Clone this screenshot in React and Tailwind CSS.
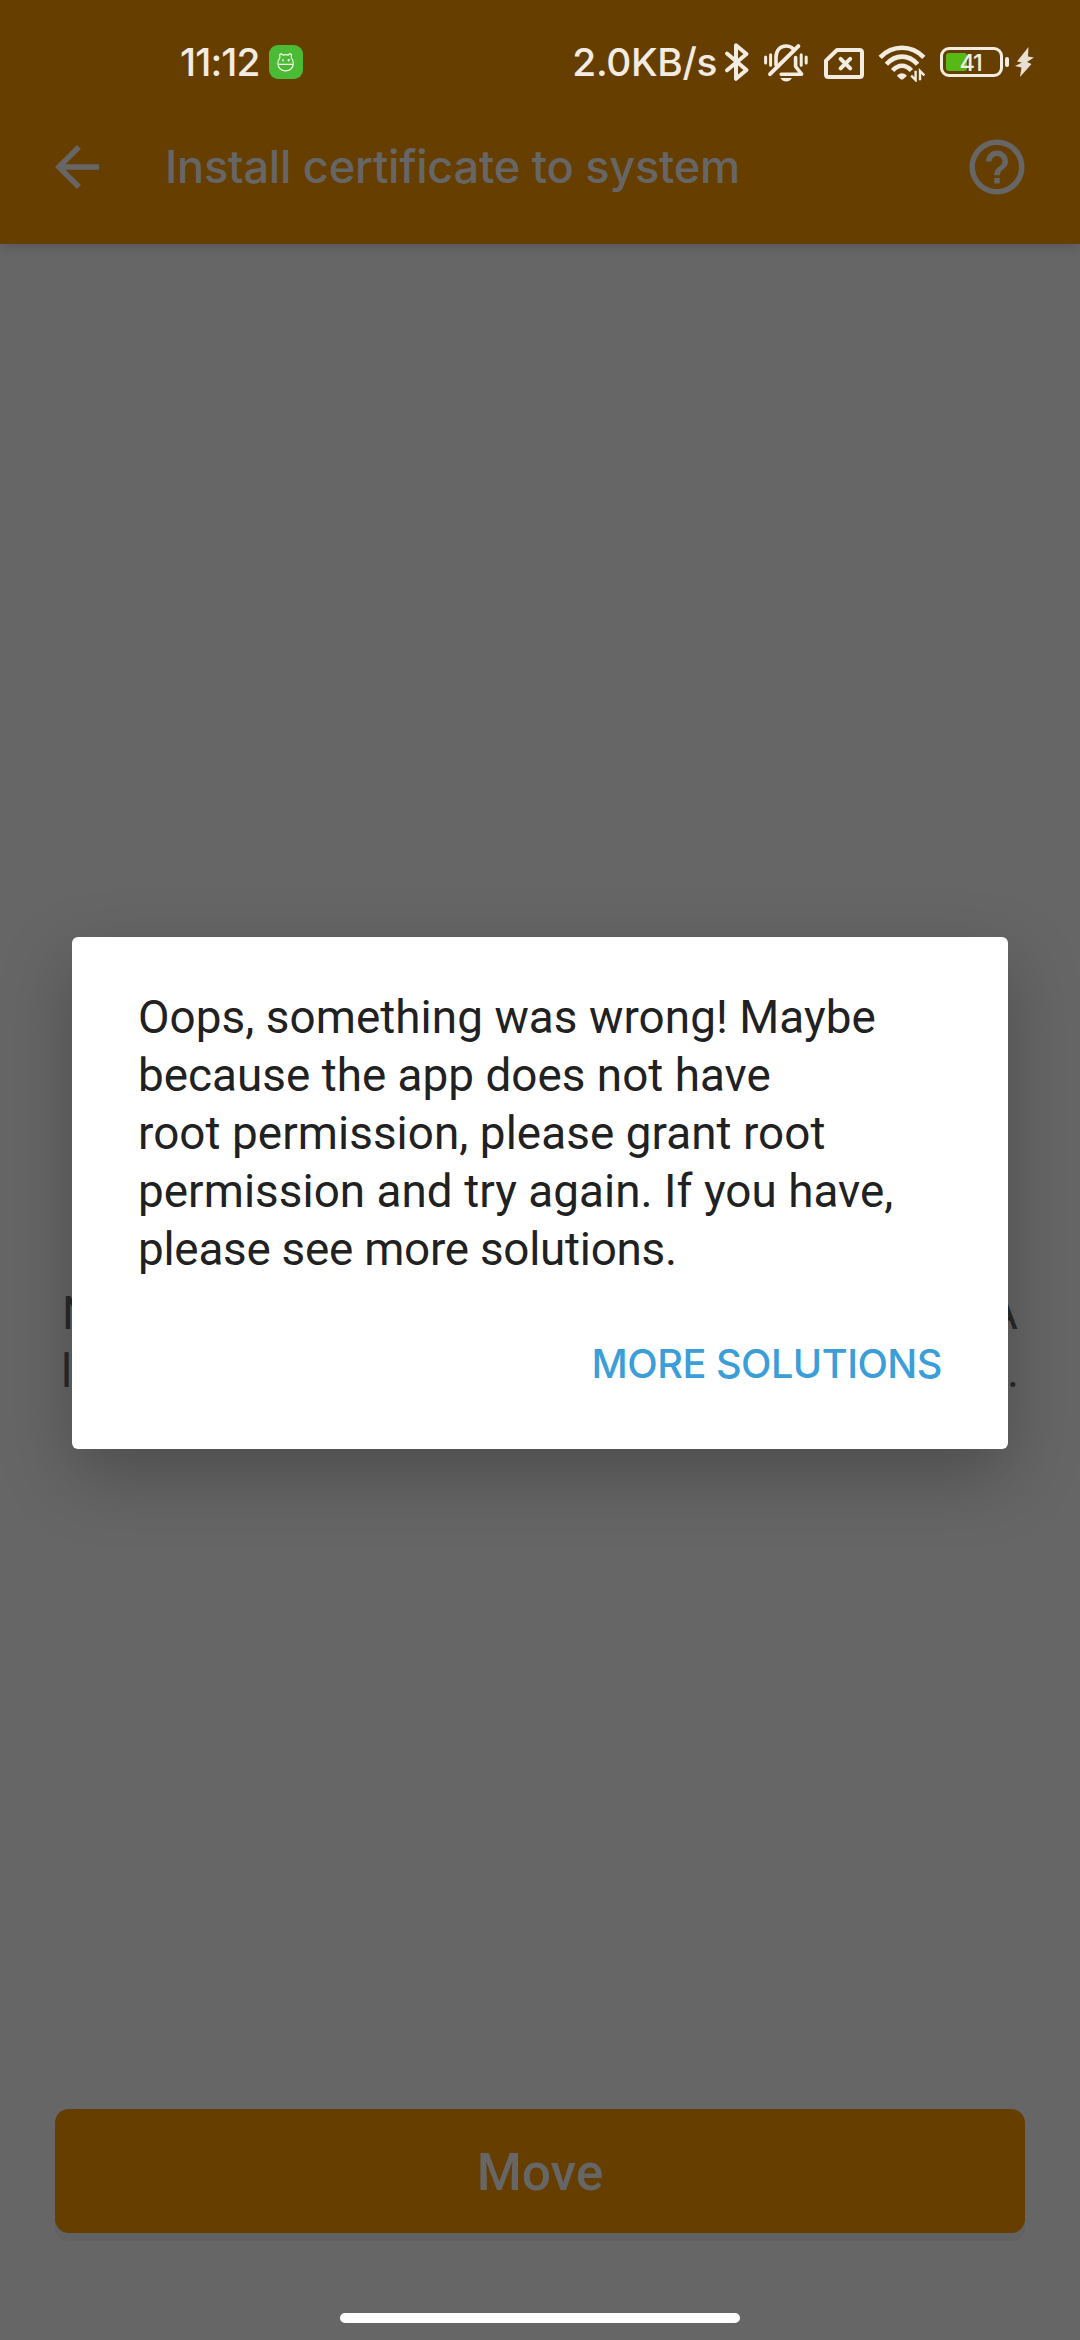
const MESSAGE = [
  { text: 'Oops, something was wrong! Maybe', style: 'tracking-[0.07px]' },
  { text: 'because the app does not have', style: 'tracking-[0.03px]' },
  { text: 'root permission, please grant root', style: 'tracking-[0.07px]' },
  { text: 'permission and try again. If you have,', style: 'tracking-[0.05px]' },
  { text: 'please see more solutions.', style: 'tracking-[-0.25px]' },
];

function AppBadge() {
  return (
    <svg className="ml-[9px] h-[34px] w-[34px] rounded-[9px] bg-[#4bbb35]" viewBox="0 0 34 34" fill="none" stroke="#f3fbe9" strokeWidth="1.2">
      <path d="M10.8 13.2V9.4l1.6-.7 1.6 1.4q2.6-.8 5.2 0l1.6-1.4 1.6.7v3.8q1.9 2.2 1.9 5c0 4.6-3.2 7.6-7.7 7.6s-7.7-3-7.7-7.6q0-2.8 1.9-5z" />
      <path d="M9.4 19.4h14.6M14 14v2.4M19.6 14v2.4M18.5 15.2h2.4" />
    </svg>
  );
}

function BluetoothIcon() {
  return (
    <svg className="h-10 w-[26px]" viewBox="0 0 26 40" fill="none" stroke="#f3ece2" strokeWidth="4" strokeLinecap="round" strokeLinejoin="round">
      <path d="M3 11.5 22.5 28 12 36.8V3.3L22.5 12 3 28.2" />
    </svg>
  );
}

function MutedBellIcon() {
  return (
    <svg className="ml-[14px] h-10 w-[44px]" viewBox="0 0 44 40" fill="none" stroke="#f3ece2" strokeLinecap="round" strokeLinejoin="round">
      <path d="M1.6 15v6M6.6 12.8v10.5M37.2 12.8v10.5M42.2 15v6" strokeWidth="3" />
      <path d="M12 23V15.5C12 8.5 16 4 22 4q4.6 0 7.4 3M31.6 15.6V24.5l6 7.7H17.2" strokeWidth="3.6" />
      <path d="M6 32.2 34.4 4.2" strokeWidth="4" />
      <path d="M16.4 36h11.6q-2.3 3.6-5.8 3.6T16.4 36z" fill="#f3ece2" stroke="none" />
    </svg>
  );
}

function NoSimIcon() {
  return (
    <svg className="ml-4 h-10 w-10" viewBox="0 0 40 40" fill="none" stroke="#f3ece2" strokeLinecap="round" strokeLinejoin="round">
      <path d="M13 8h22.5q2.5 0 2.5 2.5v22q0 2.5-2.5 2.5h-31Q2 35 2 32.5V18.6z" strokeWidth="4" />
      <path d="M16.6 16.8l9.6 9.6M26.2 16.8l-9.6 9.6" strokeWidth="4" />
    </svg>
  );
}

function WifiIcon() {
  return (
    <svg className="ml-[14px] h-10 w-[48px]" viewBox="0 0 48 40" fill="none" stroke="#f3ece2" strokeWidth="4.6">
      <path d="M2.2 15.300Q11.500 5.800 24 5.800T45.800 15.300" />
      <path d="M8.400 22.200Q15.400 14.600 24 14.600T39.600 22.200" />
      <path d="M14.600 28.500Q19 23.700 24 23.700T33.400 28.500" />
      <path d="M19.400 33Q23.900 29.400 28.400 33q.4.800-.2 1.500L25.400 37q-1.500 1.200-3 0l-2.800-2.500q-.6-.700-.2-1.500z" fill="#f3ece2" stroke="none" />
      <path d="M37.600 28.800v9.200l-4.400-4.400M42 38.200v-9.200l4.400 4.400" strokeWidth="2.400" />
    </svg>
  );
}

function Battery() {
  return (
    <div className="ml-[14px] flex items-center">
      <div className="flex h-[30px] w-[63px] rounded-[9px] border-[3px] border-[#f3ece2] p-[3px]">
        <div className="relative h-[18px] w-[51px]">
          <div className="h-full w-[21px] rounded-[3px] bg-[#58b916]" />
          <span className="absolute inset-0 pr-0.5 text-center text-[23.500px] leading-[19px] font-medium tracking-[-1.200px]">41</span>
        </div>
      </div>
      <div className="ml-[2px] h-[10px] w-1 rounded-[2px] bg-[#f3ece2]" />
      <svg className="ml-[6px] h-[30px] w-[19px]" viewBox="0 0 19 30" fill="#e9e0d3">
        <path d="M13.500 0 2 14.500l5 1L0 19l6.500 1.500L5 30 16.500 17l-4.500-2L19 10.500l-6-1z" />
      </svg>
    </div>
  );
}

function StatusBar() {
  return (
    <div className="flex h-[90px] items-center justify-between pt-[34px] pr-[46px] pl-[180px] text-[38.800px] leading-[56px] font-medium text-[#f3ece2] font-['Inter',sans-serif]">
      <div className="flex items-center">
        <span className="tracking-[-0.870px]">11:12</span>
        <AppBadge />
      </div>
      <div className="flex items-center">
        <span className="mr-[7px] tracking-[-0.340px]">2.0KB/s</span>
        <BluetoothIcon />
        <MutedBellIcon />
        <NoSimIcon />
        <WifiIcon />
        <Battery />
      </div>
    </div>
  );
}

function AppBar() {
  return (
    <div className="flex h-[154px] items-center pr-[50px] pl-[44px] text-[#666666]">
      <svg className="h-[66px] w-[66px]" viewBox="0 0 24 24" fill="currentColor">
        <path d="M20 11H7.830l5.590-5.590L12 4l-8 8 8 8 1.410-1.410L7.830 13H20v-2z" />
      </svg>
      <h1 className="ml-[55px] flex-1 text-[45.200px] leading-[58px] font-medium tracking-[-0.260px] font-['Inter',sans-serif]">Install certificate to system</h1>
      <svg className="h-[66px] w-[66px]" viewBox="0 0 24 24" fill="currentColor">
        <path d="M11 18h2v-2h-2v2zm1-16C6.480 2 2 6.480 2 12s4.480 10 10 10 10-4.480 10-10S17.520 2 12 2zm0 18c-4.410 0-8-3.590-8-8s3.590-8 8-8 8 3.590 8 8-3.590 8-8 8zm0-14c-2.210 0-4 1.790-4 4h2c0-1.100.900-2 2-2s2 .900 2 2c0 2-3 1.750-3 5h2c0-2.250 3-2.500 3-5 0-2.210-1.790-4-4-4z" />
      </svg>
    </div>
  );
}

function Dialog() {
  return (
    <div role="dialog" className="absolute top-[937px] left-[72px] h-[512px] w-[936px] rounded-[6px] bg-white px-[66px] pt-[52px] shadow-[0_26px_70px_rgba(0,0,0,0.25)]">
      <div className="text-[45.800px] leading-[58px] text-[#212121]">
        {MESSAGE.map((line) => (
          <p key={line.text} className={'whitespace-nowrap ' + line.style}>{line.text}</p>
        ))}
      </div>
      <div className="mt-[65px] flex justify-end">
        <button className="text-[39.700px] leading-[40px] font-medium tracking-[-0.510px] text-[#3b9ed8] font-['Inter',sans-serif]">MORE SOLUTIONS</button>
      </div>
    </div>
  );
}

export default function App() {
  return (
    <div className="relative flex h-[2340px] w-[1080px] flex-col overflow-hidden bg-[#666666] font-['Roboto',sans-serif]">
      <header className="bg-[#663f00] shadow-[0_4px_10px_rgba(0,0,0,0.12)]">
        <StatusBar />
        <AppBar />
      </header>
      <main className="flex flex-1 flex-col">
        <div className="mt-[1041px] flex flex-col px-[61px] text-[45.800px] leading-[58px] text-[#292929]">
          <div className="flex justify-between pr-[1px] pl-[1px]">
            <span>N</span>
            <span>A</span>
          </div>
          <div className="flex justify-between">
            <span>l</span>
            <span>.</span>
          </div>
        </div>
        <button className="mx-[55px] mt-[708px] h-[124px] rounded-[14px] bg-[#663f00] pt-1 text-[51.500px] leading-[60px] font-medium text-[#666666] shadow-[0_8px_0_#626262]">Move</button>
        <div className="mx-auto mt-20 h-[10px] w-[400px] rounded-full bg-white" />
      </main>
      <Dialog />
    </div>
  );
}
